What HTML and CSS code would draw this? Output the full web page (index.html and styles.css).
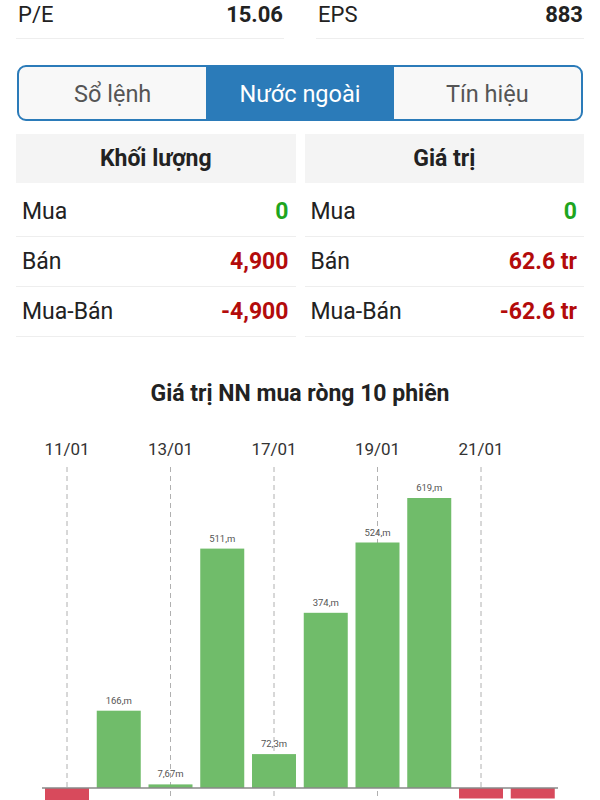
FILE: index.html
```html
<!DOCTYPE html>
<html>
<head>
    <meta charset="UTF-8" />
    <title>Nước ngoài</title>
    <link rel="stylesheet" href="styles.css">
</head>
<body>

    <div class="wrap">
        <div class="stats">
            <div class="stat"><span>P/E</span><b>15.06</b></div>
            <div class="stat"><span>EPS</span><b>883</b></div>
        </div>

        <div class="tabs">
            <div class="tab">Sổ lệnh</div>
            <div class="tab active">Nước ngoài</div>
            <div class="tab">Tín hiệu</div>
        </div>

        <div class="tables">
            <div class="table">
                <div class="head">Khối lượng</div>
                <div class="row"><span>Mua</span><b class="up">0</b></div>
                <div class="row"><span>Bán</span><b class="down">4,900</b></div>
                <div class="row"><span>Mua-Bán</span><b class="down">-4,900</b></div>
            </div>
            <div class="table">
                <div class="head">Giá trị</div>
                <div class="row"><span>Mua</span><b class="up">0</b></div>
                <div class="row"><span>Bán</span><b class="down">62.6 tr</b></div>
                <div class="row"><span>Mua-Bán</span><b class="down">-62.6 tr</b></div>
            </div>
        </div>
    </div>

    <h2 class="chart-title">Giá trị NN mua ròng 10 phiên</h2>

    <svg class="chart" width="600" height="382" viewBox="0 0 600 382">
        <g class="grid">
            <line x1="67" y1="47" x2="67" y2="382" />
            <line x1="170.5" y1="47" x2="170.5" y2="382" />
            <line x1="274" y1="47" x2="274" y2="382" />
            <line x1="377.5" y1="47" x2="377.5" y2="382" />
            <line x1="481" y1="47" x2="481" y2="382" />
        </g>
        <g class="dates">
            <text x="67" y="35">11/01</text>
            <text x="170.5" y="35">13/01</text>
            <text x="274" y="35">17/01</text>
            <text x="377.5" y="35">19/01</text>
            <text x="481" y="35">21/01</text>
        </g>
        <g class="bars">
            <rect class="neg" x="45" y="368" width="44" height="14" />
            <rect class="pos" x="96.75" y="290.7" width="44" height="77.3" />
            <rect class="pos" x="148.5" y="364.4" width="44" height="3.6" />
            <rect class="pos" x="200.25" y="128.6" width="44" height="239.4" />
            <rect class="pos" x="252" y="334.1" width="44" height="33.9" />
            <rect class="pos" x="303.75" y="192.8" width="44" height="175.2" />
            <rect class="pos" x="355.5" y="122.5" width="44" height="245.5" />
            <rect class="pos" x="407.25" y="78" width="44" height="290" />
            <rect class="neg" x="459" y="368" width="44" height="10.5" />
            <rect class="neg" x="510.75" y="368" width="44" height="10.5" />
        </g>
        <g class="values">
            <text x="118.75" y="283.5">166,m</text>
            <text x="170.5" y="357">7,67m</text>
            <text x="222.25" y="121.5">511,m</text>
            <text x="274" y="327">72,3m</text>
            <text x="325.75" y="185.5">374,m</text>
            <text x="377.5" y="115.5">524,m</text>
            <text x="429.25" y="71">619,m</text>
        </g>
        <line class="axis" x1="42" y1="368" x2="558" y2="368" />
    </svg>

</body>
</html>
```

FILE: styles.css
```css
html, body {
    margin: 0;
    height: 800px;
    overflow: hidden;
}

body {
    font-family: Roboto, "Noto Sans", sans-serif;
    color: #222222;
    background-color: #ffffff;
}

.wrap {
    padding: 0 16px;
}

.stats {
    display: flex;
    gap: 32px;
}

.stat {
    flex: 1;
    display: flex;
    justify-content: space-between;
    align-items: center;
    font-size: 22px;
    line-height: 26px;
    padding: 2px 1px 10px 2px;
    border-bottom: 1px solid #eeeeee;
}

.stat b {
    font-weight: bold;
}

.tabs {
    display: flex;
    margin: 26px 1px 0 1px;
    border: 2px solid #2b7bb9;
    border-radius: 9px;
    overflow: hidden;
    background-color: #f8f8f8;
}

.tab {
    flex: 1;
    height: 52px;
    line-height: 55px;
    text-align: center;
    font-size: 23.5px;
    color: #555555;
}

.tab.active {
    background-color: #2b7bb9;
    color: #ffffff;
}

.tables {
    display: flex;
    gap: 9px;
    margin-top: 13px;
}

.table {
    flex: 1;
}

.head {
    height: 49px;
    line-height: 50px;
    text-align: center;
    font-size: 23px;
    font-weight: bold;
    background-color: #f4f4f4;
    margin-bottom: 4px;
}

.row {
    display: flex;
    justify-content: space-between;
    align-items: center;
    height: 49px;
    padding: 0 7px 0 6px;
    font-size: 23px;
    border-bottom: 1px solid #eeeeee;
}

.row b {
    font-weight: bold;
}

.up {
    color: #1ea51e;
}

.down {
    color: #b30b0b;
}

.chart-title {
    margin: 43px 0 12px 0;
    text-align: center;
    font-size: 23px;
    line-height: 28px;
    font-weight: bold;
}

.chart {
    display: block;
}

.grid line {
    stroke: #b0b0b0;
    stroke-width: 1;
    stroke-dasharray: 5 4;
}

.dates text {
    font-family: Roboto, sans-serif;
    font-size: 17px;
    fill: #333333;
    text-anchor: middle;
}

.values text {
    font-family: Roboto, sans-serif;
    font-size: 9.5px;
    fill: #555555;
    text-anchor: middle;
}

.pos {
    fill: #70bc6a;
}

.neg {
    fill: #d84a5c;
}

.axis {
    stroke: #888888;
    stroke-width: 1.5;
}
```
